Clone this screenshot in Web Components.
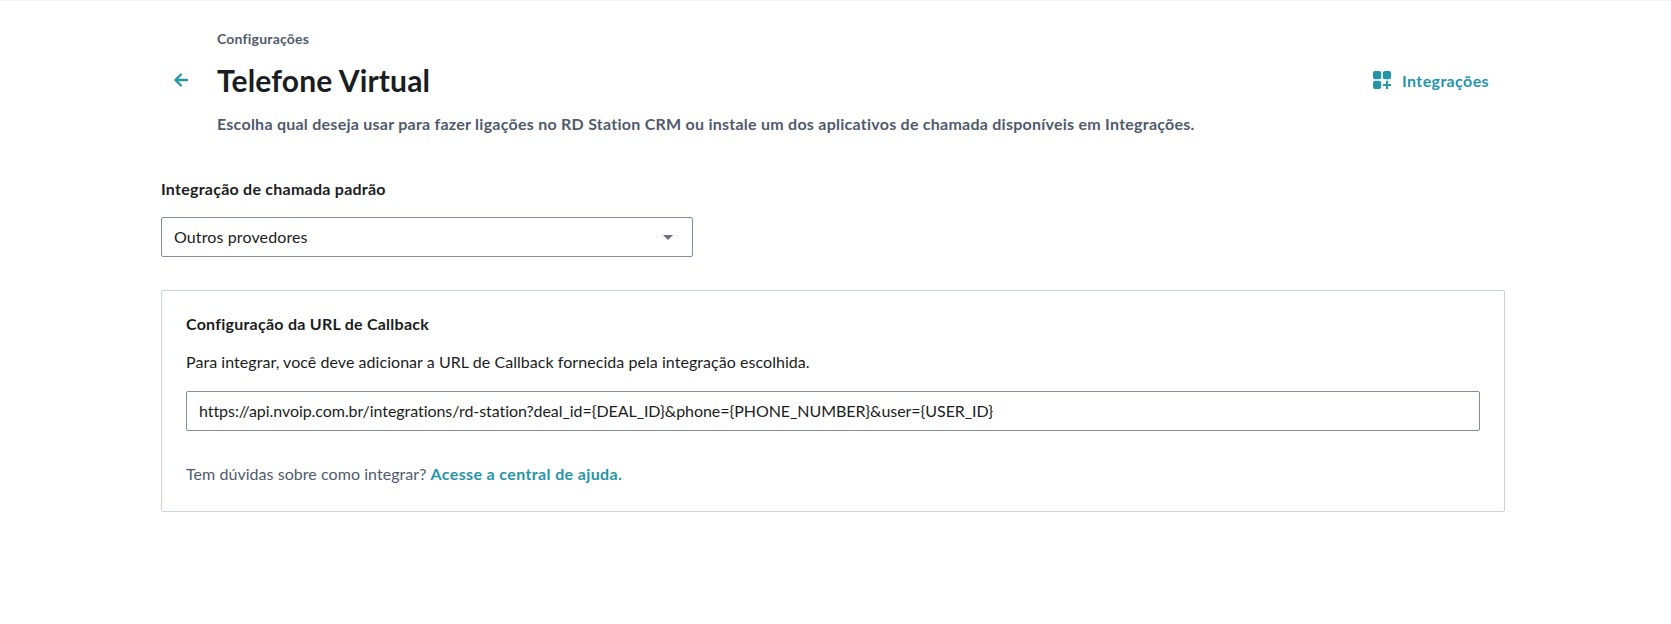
<!DOCTYPE html>
<html lang="pt-BR"><head><meta charset="utf-8"><title>Telefone Virtual</title>
<style>html,body{margin:0;padding:0;background:#fff;height:624px;overflow:hidden}body{font-family:Lato,"Noto Sans",sans-serif;font-size:16px;color:#1a1d21}</style></head>
<body>
<settings-page>
 <page-header eyebrow="Configurações" title="Telefone Virtual" desc="Escolha qual deseja usar para fazer ligações no RD Station CRM ou instale um dos aplicativos de chamada disponíveis em Integrações.">
 </page-header>
 <field-select label="Integração de chamada padrão" value="Outros provedores"></field-select>
 <callback-card></callback-card>
</settings-page>
<script>
const F='font-family:Lato,"Noto Sans",sans-serif;';
class SettingsPage extends HTMLElement{constructor(){super();this.attachShadow({mode:'open'}).innerHTML=`<style>:host{display:block;box-sizing:border-box;width:1671px;height:624px;padding:0 166px 0 161px;border-top:1px solid #f2f3f5;${F}}</style><slot></slot>`}}
class PageHeader extends HTMLElement{constructor(){super();const a=n=>this.getAttribute(n);this.attachShadow({mode:'open'}).innerHTML=`<style>
:host{display:grid;grid-template-columns:56px 1fr auto;${F}}
.eb{grid-column:2/4;font-weight:700;font-size:14px;line-height:20px;color:#4f5b6d;margin-top:28px;letter-spacing:.22px}
.back{grid-row:2;display:flex;align-items:center;height:40px;margin-top:11px;padding-left:12px}
h1{grid-row:2;grid-column:2;margin:11px 0 0;font-size:30px;font-weight:700;line-height:40px;color:#1a1d21;letter-spacing:.15px}
.int{grid-row:2;grid-column:3;display:flex;align-items:center;gap:10px;margin-top:11px;padding-right:16px;color:#2596a8;font-weight:700;font-size:16px;letter-spacing:.38px;text-decoration:none}
.d{grid-row:3;grid-column:2/4;margin:12px 0 0;font-weight:700;font-size:16px;line-height:24px;color:#4f5b6d;letter-spacing:.25px}
svg{display:block}</style>
<div class="eb">${a('eyebrow')}</div>
<div class="back"><svg width="16" height="16" viewBox="0 0 16 16" fill="none" stroke="#2596a8" stroke-width="2.4" stroke-linecap="round" stroke-linejoin="round"><path d="M14 8H2.5M8 2.5 2.5 8 8 13.5"/></svg></div>
<h1>${a('title')}</h1>
<a class="int" href="#"><svg width="20" height="20" viewBox="0 0 20 20" fill="#2596a8"><rect x="1" y="1" width="8.2" height="8.2" rx="2"/><rect x="10.8" y="1" width="8.2" height="8.2" rx="2"/><rect x="1" y="10.8" width="8.2" height="8.2" rx="2"/><path d="M13.9 10.8h2.2v3.1H19v2.2h-2.9V19h-2.2v-2.9H11v-2.2h2.9z"/></svg>Integrações</a>
<p class="d">${a('desc')}</p>`}}
class FieldSelect extends HTMLElement{constructor(){super();const a=n=>this.getAttribute(n);this.attachShadow({mode:'open'}).innerHTML=`<style>
:host{display:block;${F}}
label{display:block;font-weight:700;font-size:16px;line-height:24px;color:#1a1d21;margin-top:41px;letter-spacing:.25px}
.box{box-sizing:border-box;width:532px;height:40px;margin-top:16px;border:1px solid #858e9e;border-radius:2px;display:flex;align-items:center;justify-content:space-between;padding:0 19px 2px 12px;font-size:16px;color:#1a1d21;letter-spacing:.12px}
.c{width:0;height:0;margin-top:2px;border-left:5px solid transparent;border-right:5px solid transparent;border-top:5px solid #6b7280}</style>
<label>${a('label')}</label><div class="box"><span>${a('value')}</span><span class="c"></span></div>`}}
class CallbackCard extends HTMLElement{constructor(){super();this.attachShadow({mode:'open'}).innerHTML=`<style>
:host{display:block;box-sizing:border-box;width:1344px;height:222px;margin-top:33px;border:1px solid #ced2d9;border-radius:2px;padding:21px 24px 0 24px;${F}}
h2{margin:0;font-size:16px;line-height:24px;font-weight:700;color:#1a1d21;letter-spacing:.25px}
p{margin:14px 0 0;font-size:16px;line-height:24px;color:#1a1d21;letter-spacing:.05px}
.in{box-sizing:border-box;height:40px;margin-top:17px;border:1px solid #858e9e;border-radius:2px;display:flex;align-items:center;padding:0 12px 2px;font-size:16px;color:#1a1d21;letter-spacing:-.06px}
p.h{margin-top:31px;color:#4f5b6d}a{color:#2596a8;font-weight:700;text-decoration:none;letter-spacing:.37px}</style>
<h2>Configuração da URL de Callback</h2>
<p>Para integrar, você deve adicionar a URL de Callback fornecida pela integração escolhida.</p>
<div class="in">https://api.nvoip.com.br/integrations/rd-station?deal_id={DEAL_ID}&amp;phone={PHONE_NUMBER}&amp;user={USER_ID}</div>
<p class="h">Tem dúvidas sobre como integrar? <a href="#">Acesse a central de ajuda.</a></p>`}}
customElements.define('settings-page',SettingsPage);customElements.define('page-header',PageHeader);customElements.define('field-select',FieldSelect);customElements.define('callback-card',CallbackCard);
</script></body></html>
